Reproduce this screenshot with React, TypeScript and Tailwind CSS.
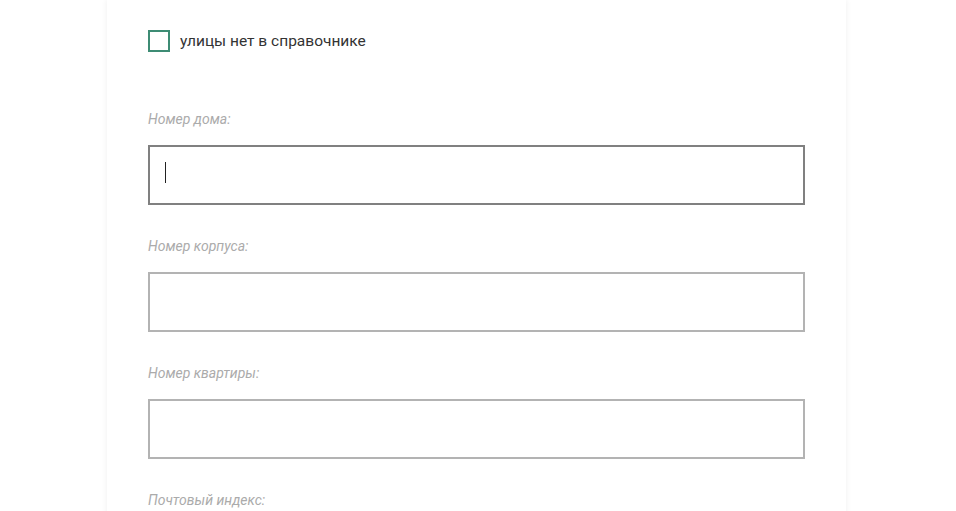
import React from "react";

const fields = [
  { label: "Номер дома:", focused: true },
  { label: "Номер корпуса:", focused: false },
  { label: "Номер квартиры:", focused: false },
  { label: "Почтовый индекс:", focused: false },
];

export default function App() {
  return (
    <div className="min-h-[511px] overflow-hidden bg-white font-['Roboto',sans-serif]">
      <div className="ml-[107px] w-[739px] min-h-[511px] bg-white px-[41px] pt-[30px] shadow-[0_0_6px_rgba(0,0,0,0.07)]">
        {/* Checkbox */}
        <label className="flex items-center gap-[10px]">
          <span className="h-[22px] w-[22px] shrink-0 border-2 border-[#3d8c74] bg-white" />
          <span className="text-[15.5px] leading-[22px] text-[#333333]">
            улицы нет в справочнике
          </span>
        </label>

        {/* Address fields */}
        <div className="mt-[57px] flex flex-col">
          {fields.map((f) => (
            <div key={f.label} className="mb-[31px]">
              <div className="mb-[16px] text-[14px] italic leading-[20px] text-[#ababab]">
                {f.label}
              </div>
              <div className="relative">
                <input
                  type="text"
                  className={
                    f.focused
                      ? "block h-[60px] w-full border-2 border-[#808080] bg-white px-[16px] caret-transparent outline-none"
                      : "block h-[60px] w-full border-2 border-[#b3b3b3] bg-white px-[16px] outline-none"
                  }
                />
                {f.focused && (
                  <span className="absolute left-[17px] top-[17px] h-[21px] w-px bg-[#222222]" />
                )}
              </div>
            </div>
          ))}
        </div>
      </div>
    </div>
  );
}
